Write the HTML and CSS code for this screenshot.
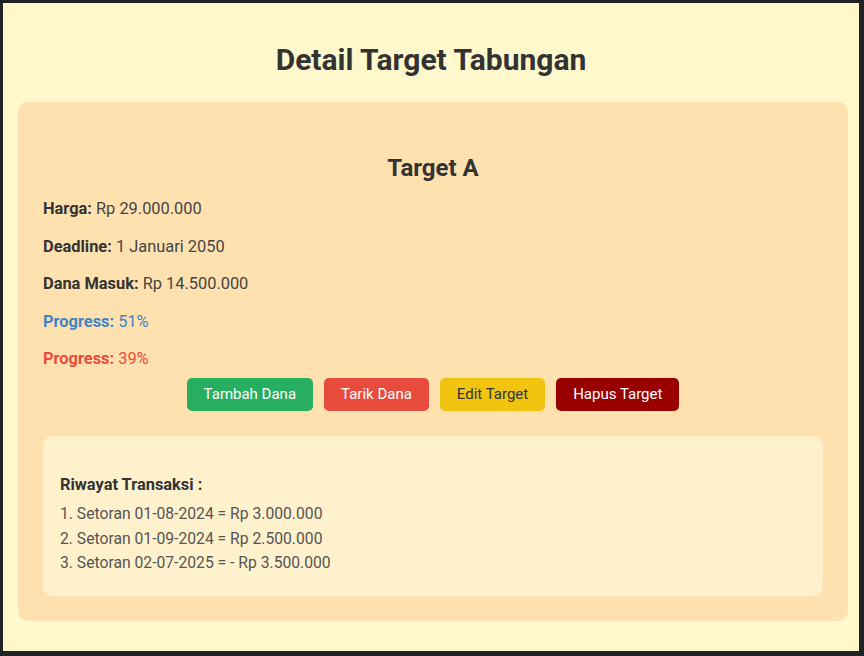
FILE: index.html
```html
<!DOCTYPE html>
<html lang="id">
<head>
<meta charset="utf-8">
<title>Detail Target Tabungan</title>
<link rel="stylesheet" href="styles.css">
</head>
<body>
<div class="frame">
  <h1 class="page-title">Detail Target Tabungan</h1>
  <div class="card">
    <h2 class="target-name">Target A</h2>
    <div class="details">
      <p class="row"><b>Harga:</b> Rp 29.000.000</p>
      <p class="row"><b>Deadline:</b> 1 Januari 2050</p>
      <p class="row"><b>Dana Masuk:</b> Rp 14.500.000</p>
      <p class="row progress-blue"><b>Progress:</b> 51%</p>
      <p class="row progress-red"><b>Progress:</b> 39%</p>
    </div>
    <div class="actions">
      <button class="btn btn-green">Tambah Dana</button>
      <button class="btn btn-red">Tarik Dana</button>
      <button class="btn btn-yellow">Edit Target</button>
      <button class="btn btn-dark">Hapus Target</button>
    </div>
    <div class="history">
      <h3 class="history-title">Riwayat Transaksi :</h3>
      <div class="history-list">
        <div class="history-item">1. Setoran 01-08-2024 = Rp 3.000.000</div>
        <div class="history-item">2. Setoran 01-09-2024 = Rp 2.500.000</div>
        <div class="history-item">3. Setoran 02-07-2025 = - Rp 3.500.000</div>
      </div>
    </div>
  </div>
</div>
</body>
</html>
```
FILE: styles.css
```css
* { box-sizing: border-box; }
html, body { margin: 0; padding: 0; background: #222; }
body { font-family: Roboto, "Liberation Sans", sans-serif; }
.frame {
  width: 864px;
  height: 656px;
  border-style: solid;
  border-color: #222;
  border-width: 3px 5px 5px 3px;
  background: #fff8cd;
  overflow: hidden;
}
.page-title {
  margin: 40px 0 25px;
  font-size: 30px;
  line-height: 34px;
  font-weight: 700;
  color: #333;
  text-align: center;
}
.card {
  margin: 0 11px 0 15px;
  padding: 25px;
  background: #ffe1b0;
  border-radius: 10px;
}
.target-name {
  margin: 28px 0 18px;
  font-size: 24px;
  line-height: 26px;
  font-weight: 700;
  color: #333;
  text-align: center;
}
.details {
  display: flex;
  flex-direction: column;
  gap: 17.5px;
}
.row {
  margin: 0;
  font-size: 16.4px;
  line-height: 20px;
  color: #444;
}
.row b { color: #333; font-weight: 700; }
.progress-blue, .progress-blue b { color: #3d85c6; }
.progress-red, .progress-red b { color: #e74c3c; }
.actions {
  margin-top: 9px;
  display: flex;
  justify-content: center;
  gap: 11px;
}
.btn {
  font-family: inherit;
  font-size: 15px;
  line-height: 17px;
  padding: 8px 17px;
  border: none;
  border-radius: 5px;
  color: #fff;
}
.btn-green { background: #27ae60; }
.btn-red { background: #e74c3c; }
.btn-yellow { background: #f1c40f; color: #333; }
.btn-dark { background: #990000; }
.history {
  margin-top: 25px;
  background: #fff1cc;
  border-radius: 10px;
  padding: 39px 17px 20px;
}
.history-title {
  margin: 0 0 7px;
  font-size: 16.4px;
  line-height: 20px;
  font-weight: 700;
  color: #333;
}
.history-item {
  font-size: 15.7px;
  line-height: 24.5px;
  color: #555;
}
```
